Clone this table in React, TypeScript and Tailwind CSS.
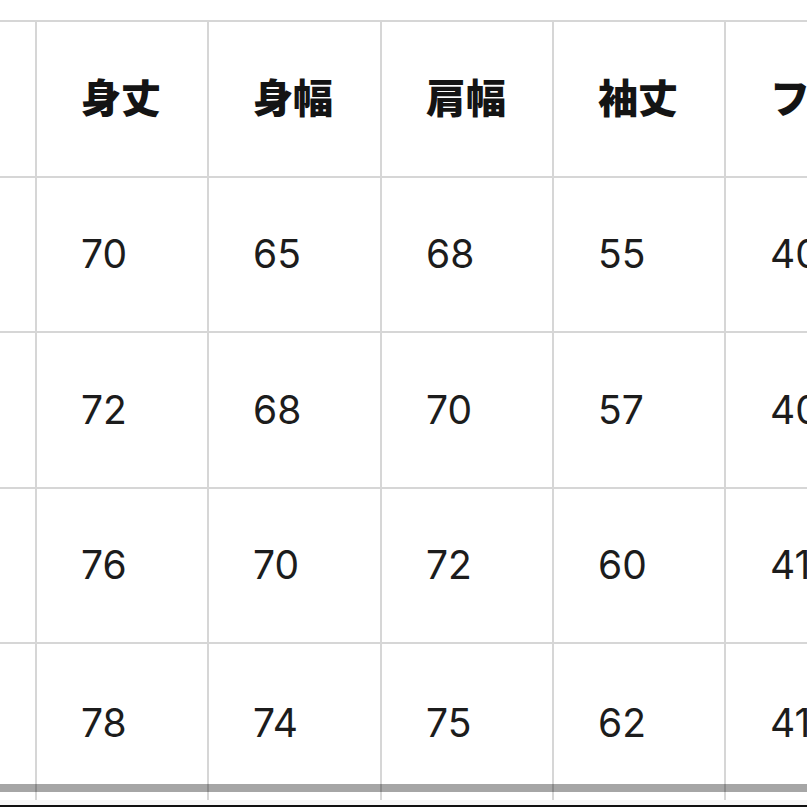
import React from "react";

const headers = ["", "身丈", "身幅", "肩幅", "袖丈", "フード"];
const rows = [
  ["", "70", "65", "68", "55", "40"],
  ["", "72", "68", "70", "57", "40"],
  ["", "76", "70", "72", "60", "41"],
  ["", "78", "74", "75", "62", "41"],
];
const rowHeights = ["h-[155px]", "h-[156px]", "h-[155px]", "h-[160px]"];
const widths = ["w-[37px]", "w-[172px] pl-[44px]", "w-[173px] pl-[44px]", "w-[172px] pl-[44px]", "w-[172px] pl-[44px]", "w-[172px] pl-[44px]"];

function Cell({ children, idx, header }: { children: React.ReactNode; idx: number; header?: boolean }) {
  return (
    <div
      className={
        widths[idx] +
        " shrink-0 h-full border-r-2 border-[#d6d6d6] flex items-center whitespace-nowrap overflow-hidden " +
        (header
          ? "pb-[6px] text-[40px] font-black text-[#141414] [font-family:'Noto_Sans_CJK_JP',sans-serif]"
          : "text-[39px] font-normal text-[#1c1c1c] [font-family:Inter,'Noto_Sans',sans-serif]")
      }
    >
      {children}
    </div>
  );
}

export default function App() {
  return (
    <div className="w-[807px] h-[807px] bg-white overflow-hidden flex flex-col">
      <div className="relative h-[800px] overflow-hidden pt-[20px]">
        <div className="w-[1000px] flex flex-col">
          <div className="flex h-[158px] border-y-2 border-[#d6d6d6]">
            {headers.map((h, i) => (
              <Cell key={i} idx={i} header>
                {h}
              </Cell>
            ))}
          </div>
          {rows.map((r, ri) => (
            <div key={ri} className={"flex border-b-2 border-[#d6d6d6] " + rowHeights[ri]}>
              {r.map((v, i) => (
                <Cell key={i} idx={i}>
                  {v}
                </Cell>
              ))}
            </div>
          ))}
        </div>
        <div className="absolute left-0 right-0 top-[784px] h-[8px] bg-black/35" />
      </div>
      <div className="h-[5px] bg-[#f7f7f7]" />
      <div className="h-[2px] bg-[#111]" />
    </div>
  );
}
